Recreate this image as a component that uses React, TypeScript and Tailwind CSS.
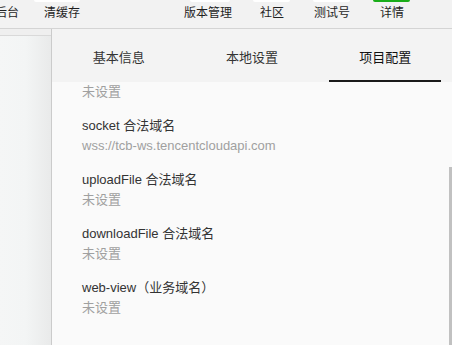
import React from "react";

const font = { fontFamily: '"Liberation Sans", "Noto Sans CJK SC", sans-serif' };

const topItems = [
  { label: "后台", w: "w-[40px]", ml: "ml-[-13px]", marker: null },
  { label: "清缓存", w: "w-[70px]", ml: "", marker: "ml-[7px] w-[46px] bg-white" },
  { label: "版本管理", w: "w-[80px]", ml: "ml-[71px]", marker: "ml-[22px] w-[40px] bg-white" },
  { label: "社区", w: "w-[48px]", ml: "", marker: "ml-[5px] w-[37px] bg-white" },
  { label: "测试号", w: "w-[72px]", ml: "", marker: "ml-[17px] w-[37px] bg-white" },
  { label: "详情", w: "w-[48px]", ml: "", marker: "ml-[5px] w-[37px] bg-[#1aad19]" },
];

const domains = [
  { label: "socket 合法域名", value: "wss://tcb-ws.tencentcloudapi.com" },
  { label: "uploadFile 合法域名", value: "未设置" },
  { label: "downloadFile 合法域名", value: "未设置" },
  { label: "web-view（业务域名）", value: "未设置" },
];

const tabs = ["基本信息", "本地设置", "项目配置"];

export default function App() {
  return (
    <div className="w-[452px] h-[345px] overflow-hidden flex flex-col bg-[#fafafa]" style={font}>
      {/* toolbar */}
      <div className="h-[29px] shrink-0 flex border-b border-[#d4d4d4] bg-[#f2f2f2] text-[12px] text-[#1f1f1f]">
        {topItems.map((it) => (
          <div key={it.label} className={`${it.w} ${it.ml} shrink-0 flex flex-col`}>
            <div className={`h-[2px] rounded-b-[2px] ${it.marker ?? "w-0"}`} />
            <div className="leading-[22px] text-center whitespace-nowrap">{it.label}</div>
          </div>
        ))}
      </div>

      <div className="flex-1 flex min-h-0">
        {/* left panel */}
        <div className="w-[52px] shrink-0 flex flex-col border-r border-[#cbcbcb]">
          <div className="h-[7px] bg-[#efefef] border-b border-[#d9d9d9]" />
          <div className="flex-1 bg-gradient-to-r from-[#f5f6f6] via-[#f3f5f5] to-[#e9eaea]" />
        </div>

        {/* right panel */}
        <div className="flex-1 flex flex-col min-w-0">
          <div className="h-[53px] shrink-0 grid grid-cols-3 bg-[#f3f3f3] text-[13px]">
            {tabs.map((t, i) => (
              <div key={t} className="flex flex-col">
                <div className={`pt-[19px] leading-[20px] text-center ${i === 2 ? "text-[#111]" : "text-[#333]"}`}>{t}</div>
                {i === 2 && <div className="mt-auto ml-[10px] mr-[11px] h-[2px] bg-[#1a1a1a]" />}
              </div>
            ))}
          </div>

          <div className="flex-1 flex min-h-0 bg-[#fafafa]">
            <div className="flex-1 pl-[30px] text-[13px] leading-[20px]">
              <div className="text-[#a0a0a0]">未设置</div>
              {domains.map((d) => (
                <div key={d.label} className="mt-[14px]">
                  <div className="text-[#333]">{d.label}</div>
                  <div className="text-[#a0a0a0]">{d.value}</div>
                </div>
              ))}
            </div>
            <div className="w-[3px] shrink-0 flex flex-col pt-[85px]">
              <div className="flex-1 bg-[#c1c1c1]" />
            </div>
          </div>
        </div>
      </div>
    </div>
  );
}
